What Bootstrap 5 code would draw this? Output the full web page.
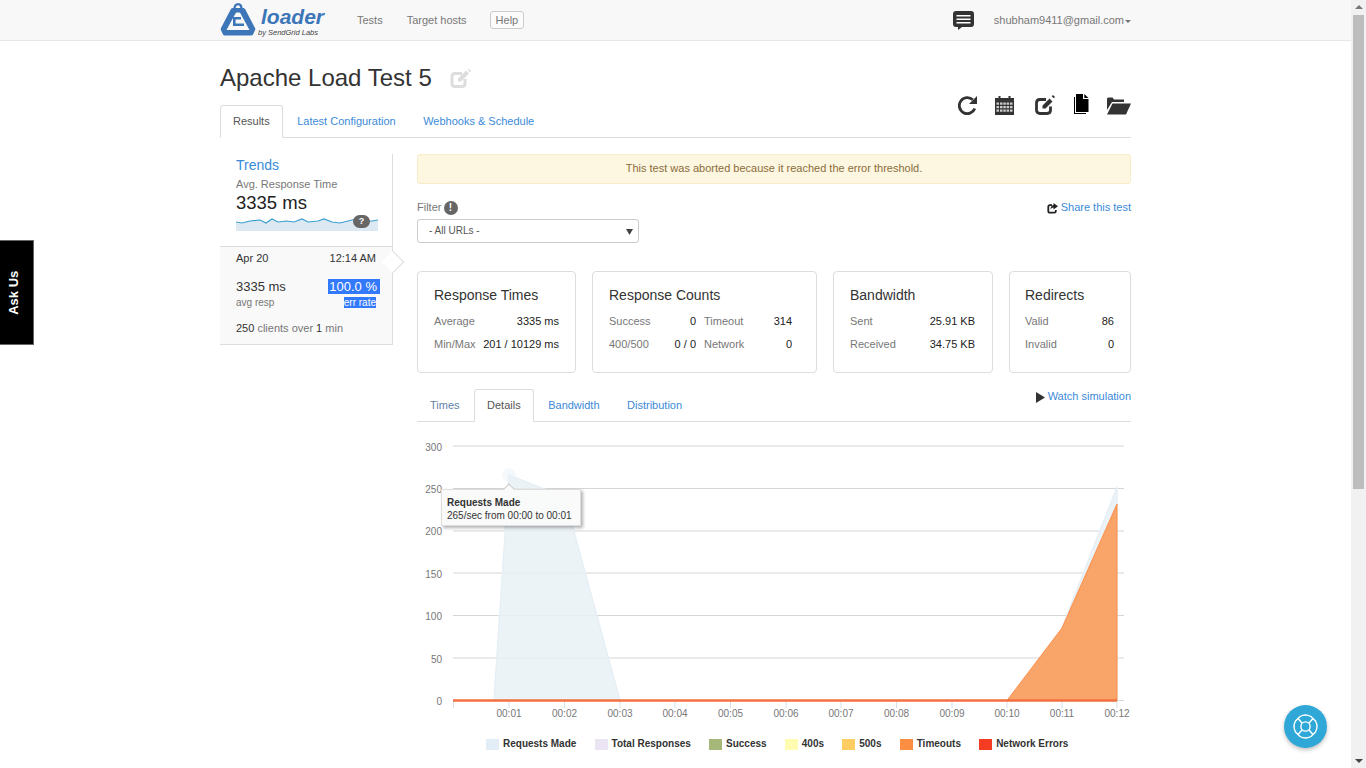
<!DOCTYPE html>
<html lang="en">
<head>
  <meta charset="UTF-8" />
  <meta name="viewport" content="width=device-width, initial-scale=1" />
  <title>Apache Load Test 5 - Loader</title>
  <link href="https://cdn.jsdelivr.net/npm/bootstrap@5.3.0/dist/css/bootstrap.min.css" rel="stylesheet" />
  <style>
    html, body { height: 100%; overflow: hidden; }
    body {
      font-family: "Liberation Sans", Arial, sans-serif;
      font-size: 11px;
      color: #333;
      background: #fff;
      padding-right: 15px;
    }
    a { text-decoration: none; color: #3b8ad9; }

    /* top bar */
    .topbar { height: 41px; padding: 0; background: #f8f8f8; border-bottom: 1px solid #e7e7e7; }
    .topbar-inner { width: 911px; margin: 0 auto; height: 40px; }
    .brand-box { width: 137px; height: 40px; gap: 2px; overflow: hidden; }
    .brand-word { font-size: 21px; line-height: 25px; font-weight: 700; font-style: italic; color: #3c76b8; margin-top: 4px; margin-left: 3px; }
    .brand-by { font-size: 7.500px; line-height: 9px; font-style: italic; color: #444; margin-top: -1px; }
    .navbar-expand .navbar-nav .nav-link, .topbar .nav-link { color: #777; font-size: 11px; padding: 0; line-height: 14px; }
    .top-links { gap: 24px; }
    .navbar-expand .navbar-nav .help-box { border: 1px solid #ccc; border-radius: 3px; padding: 1px 5px; margin-left: -1px; background: #fbfbfb; }
    .user-caret { display: inline-block; border-top: 3px solid #777; border-left: 3px solid transparent; border-right: 3px solid transparent; margin-left: 1px; vertical-align: middle; }
    .user-box { gap: 20px; }

    /* page */
    .page-wrap { width: 911px; margin: 0 auto; }
    .title-row { height: 97px; border-bottom: 1px solid #ddd; }
    .test-title { font-size: 24px; line-height: 29px; font-weight: 400; margin: 22px 0 13px; color: #333; }
    .title-edit { margin-left: 12px; vertical-align: -3px; }
    .tabs-plain { border-bottom: 0; gap: 1.500px; font-size: 11px; }
    .tabs-plain .nav-link { padding: 8px 12px 10px; line-height: 14px; border-radius: 3px 3px 0 0; color: #3b8ad9; height: 33px; }
    .tabs-plain .nav-link.active { color: #555; border-color: #ddd #ddd #fff; background: #fff; }
    .tools-row { margin-top: 54px; }
    .tool-ico { display: block; }
    .tool-redo { margin-right: 17px; }
    .tool-cal { margin-right: 21px; }
    .tool-edit { margin-right: 19px; }
    .tool-file { margin-right: 18px; margin-top: -1px; }
    .tool-open { margin-top: 1px; }

    .main-row { gap: 24px; margin-top: 16px; }
    .side-col { width: 173px; flex: none; }
    .trend-box { height: 92px; border-right: 1px solid #ddd; padding: 2px 14px 0 16px; }
    .trend-link { font-size: 14px; line-height: 18px; display: block; }
    .trend-sub { color: #777; line-height: 13px; margin-top: 4px; }
    .trend-num { font-size: 18.500px; line-height: 21px; color: #222; margin-top: 1px; }
    .spark-box { margin-top: 0; height: 18px; }
    .spark-tag { top: 2px; right: 8px; width: 17px; height: 13px; border-radius: 7px; background: #666; color: #fff; font-size: 9px; line-height: 13px; font-weight: 700; text-align: center; }
    .run-item { height: 99px; background: #f9f9f9; border: 1px solid #ddd; border-left: 0; padding: 3px 16px 0 16px; color: #333; }
    .run-arrow { width: 16px; height: 16px; right: -9px; top: 7px; background: #fff; border-top: 1px solid #ddd; border-right: 1px solid #ddd; transform: rotate(45deg); }
    .run-big { font-size: 13px; line-height: 15px; margin-top: 12px; }
    .run-small { font-size: 10px; line-height: 11px; color: #777; margin-top: 3px; }
    .sel-text { background: #3379fb; color: #fff; }
    .sel-big { font-size: 13px; padding: 0 3px 0 1px; width: 52px; margin-right: -4px; text-align: right; }
    .run-foot { color: #777; margin-top: 13px; line-height: 14px; }
    .run-foot b { font-weight: 400; color: #333; }

    .body-col { width: 714px; flex: none; }
    .warn-note { background: #fdf6e1; border-color: #f8ecc9; color: #8a6d3b; height: 30px; padding: 6px 0; margin: 0; line-height: 15px; font-size: 11px; border-radius: 3px; }
    .filter-row { height: 60px; margin-top: 16px; margin-bottom: 11px; }
    .filter-label { color: #777; line-height: 14px; margin-bottom: 4px; }
    .info-dot { display: inline-block; width: 14px; height: 14px; border-radius: 50%; background: #666; color: #fff; font-weight: 700; font-size: 10px; line-height: 14px; text-align: center; margin-left: -1px; }
    .url-pick { width: 222px; height: 24px; padding: 0 11px; font-size: 10px; line-height: 22px; color: #555; border-color: #ccc; border-radius: 3px; min-height: 0; font-family: inherit;
      background-image: url("data:image/svg+xml,%3csvg xmlns='http://www.w3.org/2000/svg' viewBox='0 0 8 8'%3e%3cpath fill='%23444' d='M0 1h8L4 8z'/%3e%3c/svg%3e"); background-size: 7px 7px; background-position: right 5px center; }
    .share-link { line-height: 14px; }

    .stat-row { gap: 16px; }
    .stat-box { height: 102px; padding: 14px 16px 0 16px; border-color: #ddd; border-radius: 4px; flex: none; }
    .stat-w1 { width: 159px; }
    .stat-w2 { width: 225px; }
    .stat-w3 { width: 160px; padding-right: 17px; }
    .stat-w4 { width: 122px; padding-left: 15px; }
    .stat-name { font-size: 14px; line-height: 18px; font-weight: 400; color: #333; margin: 0 0 10px; }
    .stat-line { line-height: 14px; margin-bottom: 9px; color: #222; }
    .stat-line span:first-child { color: #777; }
    .stat-pair { gap: 8px; }
    .stat-half1 { width: 87px; }
    .stat-half2 { width: 88px; }
    .tabs-plain .dim-link, .stat-line .dim-link { color: #5f7fa8; }

    .chart-tabs { margin-top: 16px; border-bottom: 1px solid #ddd; height: 33px; }
    .chart-wrap { height: 300px; margin-top: 8px; }
    .chart-svg { display: block; }
    .chart-svg text { font-family: "Liberation Sans", Arial, sans-serif; font-size: 10px; fill: #777; }
    .hint-box { left: 24px; top: 59px; width: 140px; height: 37px; padding: 6px 5px 0; line-height: 13px; font-size: 10px; color: #333; background: rgba(250, 250, 250, .93); border: 1px solid #ddd; box-shadow: 2px 2px 3px rgba(0,0,0,.3); white-space: nowrap; }
    .hint-box b { display: block; }
    .hint-box::before { content: ""; position: absolute; left: 63px; top: -5px; width: 8px; height: 8px; background: #fafafa; border-top: 1px solid #ccc; border-left: 1px solid #ccc; transform: rotate(45deg); }
    .legend-row { font-size: 10px; font-weight: 700; line-height: 12px; color: #333; margin-left: 69px; margin-top: 8px; }
    .legend-item { margin-right: 18.200px; gap: 4px; }
    .legend-sq { width: 13px; height: 11px; }
    .sq-req { background: #e3edf5; }
    .sq-total { background: #ebe4f3; }
    .sq-ok { background: #a5b87a; }
    .sq-400 { background: #fdfcb0; }
    .sq-500 { background: #fdcd62; }
    .sq-time { background: #fb8e42; }
    .sq-net { background: #f33c22; }

    /* things fixed over the page */
    .ask-tab { left: 0; top: 240px; width: 34px; height: 105px; padding-right: 4px; background: #000; border: 1px solid #666; border-left: 0; }
    .ask-tab span { color: #fff; font-weight: 700; font-size: 13px; transform: rotate(-90deg); white-space: nowrap; }
    .help-fab { right: 39px; top: 705px; width: 43px; height: 43px; border-radius: 50%; background: #2fa8d8; box-shadow: 0 2px 4px rgba(0,0,0,.25); }
    .fake-scroll { right: 0; top: 0; width: 15px; height: 100%; background: #f1f1f1; }
    .fake-thumb { left: 2px; top: 15px; width: 11px; height: 474px; background: #bdbdbd; }
    .fake-up { left: 4px; top: 5px; border-bottom: 4px solid #777; border-left: 4px solid transparent; border-right: 4px solid transparent; }
    .fake-down { left: 4px; bottom: 5px; border-top: 4px solid #444; border-left: 4px solid transparent; border-right: 4px solid transparent; }
  </style>
</head>
<body>
  <nav class="navbar navbar-expand topbar">
    <div class="topbar-inner d-flex align-items-center">
      <a class="brand-box d-flex" href="#">
        <svg width="36" height="37" viewBox="0 0 36 37" class="flex-shrink-0">
          <path d="M14.500 9C14.500 2.500 21.500 2.500 21.500 9" fill="none" stroke="#3c76b8" stroke-width="2.400"/>
          <path d="M13 8h10q1.500 0 2.200 1.300L35 28q.6 1.200 0 2.200L33 34.400q-.6 1.100-1.900 1.100H5q-1.400 0-2-1.100L1 30.200q-.6-1 0-2.200L10.800 9.300Q11.500 8 13 8z" fill="#3c76b8"/>
          <path d="M16.800 12.500h2.400q.8 0 1.200.8L29.500 30h-23l9.100-16.700q.4-.8 1.200-.8z" fill="#f8f8f8"/>
          <path d="M13 17h8v2.400h-5.400v4.200h8.400V26H13z" fill="#3c76b8"/>
        </svg>
        <span class="d-flex flex-column">
          <span class="brand-word">loader</span>
          <span class="brand-by">by SendGrid Labs</span>
        </span>
      </a>
      <ul class="navbar-nav top-links align-items-center">
        <li class="nav-item"><a class="nav-link" href="#">Tests</a></li>
        <li class="nav-item"><a class="nav-link" href="#">Target hosts</a></li>
        <li class="nav-item"><a class="nav-link help-box" href="#">Help</a></li>
      </ul>
      <div class="user-box d-flex align-items-center ms-auto">
        <svg width="21" height="19" viewBox="0 0 21 19">
          <path d="M3 0h15q3 0 3 3v10q0 3-3 3H9l-4 3v-3H3q-3 0-3-3V3q0-3 3-3z" fill="#333"/>
          <path d="M3.500 4h14v1.400h-14zM3.500 7.500h14v1.400h-14zM3.500 11h14v1.400h-14z" fill="#fff"/>
        </svg>
        <a class="nav-link" href="#">shubham9411@gmail.com<span class="user-caret"></span></a>
      </div>
    </div>
  </nav>

  <main class="page-wrap">
    <div class="title-row d-flex justify-content-between">
      <div>
        <h1 class="test-title">Apache Load Test 5
          <svg class="title-edit" width="21" height="20" viewBox="0 0 21 20">
            <path d="M15 10v4.500q0 3-3 3H5q-3 0-3-3v-7q0-3 3-3h7" fill="none" stroke="#ddd" stroke-width="3"/>
            <path d="M8 9.500l8-8 3 3-8 8H8zM19 0l2 2-1.200 1.200-2-2z" fill="#ddd"/>
          </svg>
        </h1>
        <ul class="nav nav-tabs tabs-plain">
          <li class="nav-item"><a class="nav-link active" href="#">Results</a></li>
          <li class="nav-item"><a class="nav-link" href="#">Latest Configuration</a></li>
          <li class="nav-item"><a class="nav-link" href="#">Webhooks &amp; Schedule</a></li>
        </ul>
      </div>
      <div class="tools-row d-flex align-items-start">
        <svg class="tool-ico tool-redo" width="20" height="21" viewBox="0 0 20 21">
          <path d="M16.800 13.500A8 8 0 1 1 14.800 4.800" fill="none" stroke="#333" stroke-width="2.800"/>
          <path d="M19 1v8h-8z" fill="#333"/>
        </svg>
        <svg class="tool-ico tool-cal" width="19" height="20" viewBox="0 0 19 20">
          <path d="M0 3h3.500V1h2v2h8V1h2v2H19v17H0z" fill="#333"/>
          <path d="M1.500 7.500h2.500v2.200H1.500zM5 7.500h2.500v2.200H5zM8.300 7.500h2.500v2.200H8.300zM11.600 7.500h2.500v2.200h-2.500zM15 7.500h2.500v2.200H15zM1.500 11h2.500v2.200H1.500zM5 11h2.500v2.200H5zM8.300 11h2.500v2.200H8.300zM11.600 11h2.500v2.200h-2.500zM15 11h2.500v2.200H15zM1.500 14.500h2.500v2.200H1.500zM5 14.500h2.500v2.200H5zM8.300 14.500h2.500v2.200H8.300zM11.600 14.500h2.500v2.200h-2.500zM15 14.500h2.500v2.200H15z" fill="#fff" fill-opacity=".75"/>
        </svg>
        <svg class="tool-ico tool-edit" width="20" height="20" viewBox="0 0 20 20">
          <path d="M15.500 11.500v3.500q0 3.500-3.500 3.500H5q-3.500 0-3.500-3.500V8q0-3.500 3.500-3.500h6" fill="none" stroke="#333" stroke-width="2.800"/>
          <path d="M7.500 10.500l7-7 3 3-7 7h-3zM18 0l2 2-1.300 1.300-2-2z" fill="#333"/>
        </svg>
        <svg class="tool-ico tool-file" width="15" height="20" viewBox="0 0 15 20">
          <path d="M0 3h1v16h11v1H0z" fill="#000"/>
          <path d="M2 0h7v5h5.500v13H2z" fill="#000"/>
          <path d="M10.300 0l4.200 4h-4.200z" fill="#000"/>
        </svg>
        <svg class="tool-ico tool-open" width="24" height="19" viewBox="0 0 24 19">
          <path d="M0 3q0-1.500 1.500-1.500h4l1.500 2h10V6H5L0 14z" fill="#333"/>
          <path d="M5.500 7.500H24L19 18.500H0z" fill="#333"/>
        </svg>
      </div>
    </div>

    <div class="main-row d-flex">
      <aside class="side-col">
        <div class="trend-box">
          <a class="trend-link" href="#">Trends</a>
          <div class="trend-sub">Avg. Response Time</div>
          <div class="trend-num">3335 ms</div>
          <div class="spark-box position-relative">
            <svg width="142" height="18" viewBox="0 0 142 18" class="d-block">
              <path d="M0 9L6 10 14 8 24 7 30 10 36 6 42 9 50 8 58 9 66 6 72 9 82 8 88 6 96 9 104 10 112 8 120 6 128 8 136 8 142 7V18H0z" fill="#dce9f3"/>
              <path d="M0 9L6 10 14 8 24 7 30 10 36 6 42 9 50 8 58 9 66 6 72 9 82 8 88 6 96 9 104 10 112 8 120 6 128 8 136 8 142 7" fill="none" stroke="#3b9fcf" stroke-width="1.200"/>
            </svg>
            <span class="spark-tag position-absolute">?</span>
          </div>
        </div>
        <div class="run-item position-relative">
          <span class="run-arrow position-absolute"></span>
          <div class="d-flex justify-content-between position-relative"><span>Apr 20</span><span>12:14 AM</span></div>
          <div class="d-flex justify-content-between run-big"><span>3335 ms</span><span class="sel-text sel-big">100.0 %</span></div>
          <div class="d-flex justify-content-between run-small"><span>avg resp</span><span class="sel-text px-0">err rate</span></div>
          <div class="run-foot"><b>250</b> clients over <b>1</b> min</div>
        </div>
      </aside>

      <section class="body-col">
        <div class="alert alert-warning warn-note text-center" role="alert">This test was aborted because it reached the error threshold.</div>

        <div class="filter-row d-flex justify-content-between">
          <div>
            <div class="filter-label">Filter <span class="info-dot">!</span></div>
            <select class="form-select url-pick"><option>- All URLs -</option></select>
          </div>
          <a class="share-link" href="#">
            <svg width="11" height="11" viewBox="0 0 11 11">
              <path d="M8.800 7v1.200Q8.800 9.700 7.300 9.700H2.800Q1.300 9.700 1.300 8.200V3.700Q1.300 2.200 2.800 2.200H5" fill="none" stroke="#222" stroke-width="1.800"/>
              <path d="M6.500 0L11 3.200 6.500 6.400V4.600Q4.500 4.600 3.500 6.500 3.700 2.400 6.500 1.900z" fill="#222"/>
            </svg>
            Share this test</a>
        </div>

        <div class="stat-row d-flex">
          <div class="card stat-box stat-w1">
            <h5 class="stat-name">Response Times</h5>
            <div class="stat-line d-flex justify-content-between"><span>Average</span><span>3335 ms</span></div>
            <div class="stat-line d-flex justify-content-between"><span>Min/Max</span><span>201 / 10129 ms</span></div>
          </div>
          <div class="card stat-box stat-w2">
            <h5 class="stat-name">Response Counts</h5>
            <div class="stat-pair d-flex">
              <div class="stat-line d-flex justify-content-between stat-half1"><span>Success</span><span>0</span></div>
              <div class="stat-line d-flex justify-content-between stat-half2"><span>Timeout</span><span>314</span></div>
            </div>
            <div class="stat-pair d-flex">
              <div class="stat-line d-flex justify-content-between stat-half1"><span class="dim-link">400/500</span><span>0 / 0</span></div>
              <div class="stat-line d-flex justify-content-between stat-half2"><span>Network</span><span>0</span></div>
            </div>
          </div>
          <div class="card stat-box stat-w3">
            <h5 class="stat-name">Bandwidth</h5>
            <div class="stat-line d-flex justify-content-between"><span>Sent</span><span>25.91 KB</span></div>
            <div class="stat-line d-flex justify-content-between"><span>Received</span><span>34.75 KB</span></div>
          </div>
          <div class="card stat-box stat-w4">
            <h5 class="stat-name">Redirects</h5>
            <div class="stat-line d-flex justify-content-between"><span>Valid</span><span>86</span></div>
            <div class="stat-line d-flex justify-content-between"><span>Invalid</span><span>0</span></div>
          </div>
        </div>

        <div class="chart-tabs d-flex justify-content-between">
          <ul class="nav nav-tabs tabs-plain">
            <li class="nav-item"><a class="nav-link dim-link" href="#">Times</a></li>
            <li class="nav-item"><a class="nav-link active" href="#">Details</a></li>
            <li class="nav-item"><a class="nav-link" href="#">Bandwidth</a></li>
            <li class="nav-item"><a class="nav-link" href="#">Distribution</a></li>
          </ul>
          <a href="#" class="share-link">
            <svg width="10" height="11" viewBox="0 0 10 11"><path d="M1 0l9 5.500L1 11z" fill="#333"/></svg>
            Watch simulation</a>
        </div>

        <div class="chart-wrap position-relative">
          <svg class="chart-svg" width="714" height="300" viewBox="417 430 714 300">
            <path d="M453 446h671M453 488.500h671M453 531h671M453 573h671M453 615.500h671M453 658h671M453 700.500h671" stroke="#d6d6d6" stroke-width="1"/>
            <g text-anchor="end">
              <text x="442" y="451">300</text>
              <text x="442" y="493">250</text>
              <text x="442" y="535">200</text>
              <text x="442" y="578">150</text>
              <text x="442" y="620">100</text>
              <text x="442" y="663">50</text>
              <text x="442" y="705">0</text>
            </g>
            <path d="M494 700.500L509 475 564.500 497 620 700.500z" fill="#e9f1f6" fill-opacity=".85" stroke="#e6eff6" stroke-width="1.500"/>
            <path d="M1062 700.500V628L1117 487V700.500z" fill="#e9f1f6" fill-opacity=".85" stroke="#e6eff6" stroke-width="1.500"/>
            <path d="M1007 700.500L1062 628 1117 504V700.500z" fill="#f9a468" stroke="#fb8f4a" stroke-width="1"/>
            <circle cx="509" cy="475" r="7" fill="#e9f1f6" fill-opacity=".45"/>
            <path d="M453.500 701v7M509 701v7M564.500 701v7M620 701v7M675 701v7M730.500 701v7M786 701v7M841 701v7M896.500 701v7M952 701v7M1007 701v7M1062 701v7M1117 701v7" stroke="#d6e0ea" stroke-width="1"/>
            <path d="M453 700.500H1117" stroke="#f2703f" stroke-width="2.400"/>
            <g text-anchor="middle">
              <text x="509" y="717">00:01</text>
              <text x="564.500" y="717">00:02</text>
              <text x="620" y="717">00:03</text>
              <text x="675" y="717">00:04</text>
              <text x="730.500" y="717">00:05</text>
              <text x="786" y="717">00:06</text>
              <text x="841" y="717">00:07</text>
              <text x="896.500" y="717">00:08</text>
              <text x="952" y="717">00:09</text>
              <text x="1007" y="717">00:10</text>
              <text x="1062" y="717">00:11</text>
              <text x="1117" y="717">00:12</text>
            </g>
          </svg>
          <div class="hint-box position-absolute"><b>Requests Made</b>265/sec from 00:00 to 00:01</div>
        </div>

        <div class="legend-row d-flex">
          <div class="legend-item d-flex align-items-center"><span class="legend-sq sq-req"></span>Requests Made</div>
          <div class="legend-item d-flex align-items-center"><span class="legend-sq sq-total"></span>Total Responses</div>
          <div class="legend-item d-flex align-items-center"><span class="legend-sq sq-ok"></span>Success</div>
          <div class="legend-item d-flex align-items-center"><span class="legend-sq sq-400"></span>400s</div>
          <div class="legend-item d-flex align-items-center"><span class="legend-sq sq-500"></span>500s</div>
          <div class="legend-item d-flex align-items-center"><span class="legend-sq sq-time"></span>Timeouts</div>
          <div class="legend-item d-flex align-items-center"><span class="legend-sq sq-net"></span>Network Errors</div>
        </div>
      </section>
    </div>
  </main>

  <div class="ask-tab position-fixed d-flex align-items-center justify-content-center"><span>Ask Us</span></div>

  <a class="help-fab position-fixed d-flex align-items-center justify-content-center" href="#">
    <svg width="25" height="25" viewBox="0 0 25 25" fill="none" stroke="#fff" stroke-width="1.400">
      <path d="M7 2.500Q12.500-.5 18 2.500L22.500 7Q25.500 12.500 22.500 18L18 22.500Q12.500 25.500 7 22.500L2.500 18Q-.5 12.500 2.500 7z"/>
      <circle cx="12.500" cy="12.500" r="4.600"/>
      <path d="M5 4.500L9.200 9.200M20 4.500L15.800 9.200M5 20.500L9.200 15.800M20 20.500L15.800 15.800"/>
    </svg>
  </a>

  <div class="fake-scroll position-fixed">
    <span class="fake-up position-absolute"></span>
    <span class="fake-thumb position-absolute"></span>
    <span class="fake-down position-absolute"></span>
  </div>

  <script src="https://cdn.jsdelivr.net/npm/bootstrap@5.3.0/dist/js/bootstrap.bundle.min.js"></script>
</body>
</html>
